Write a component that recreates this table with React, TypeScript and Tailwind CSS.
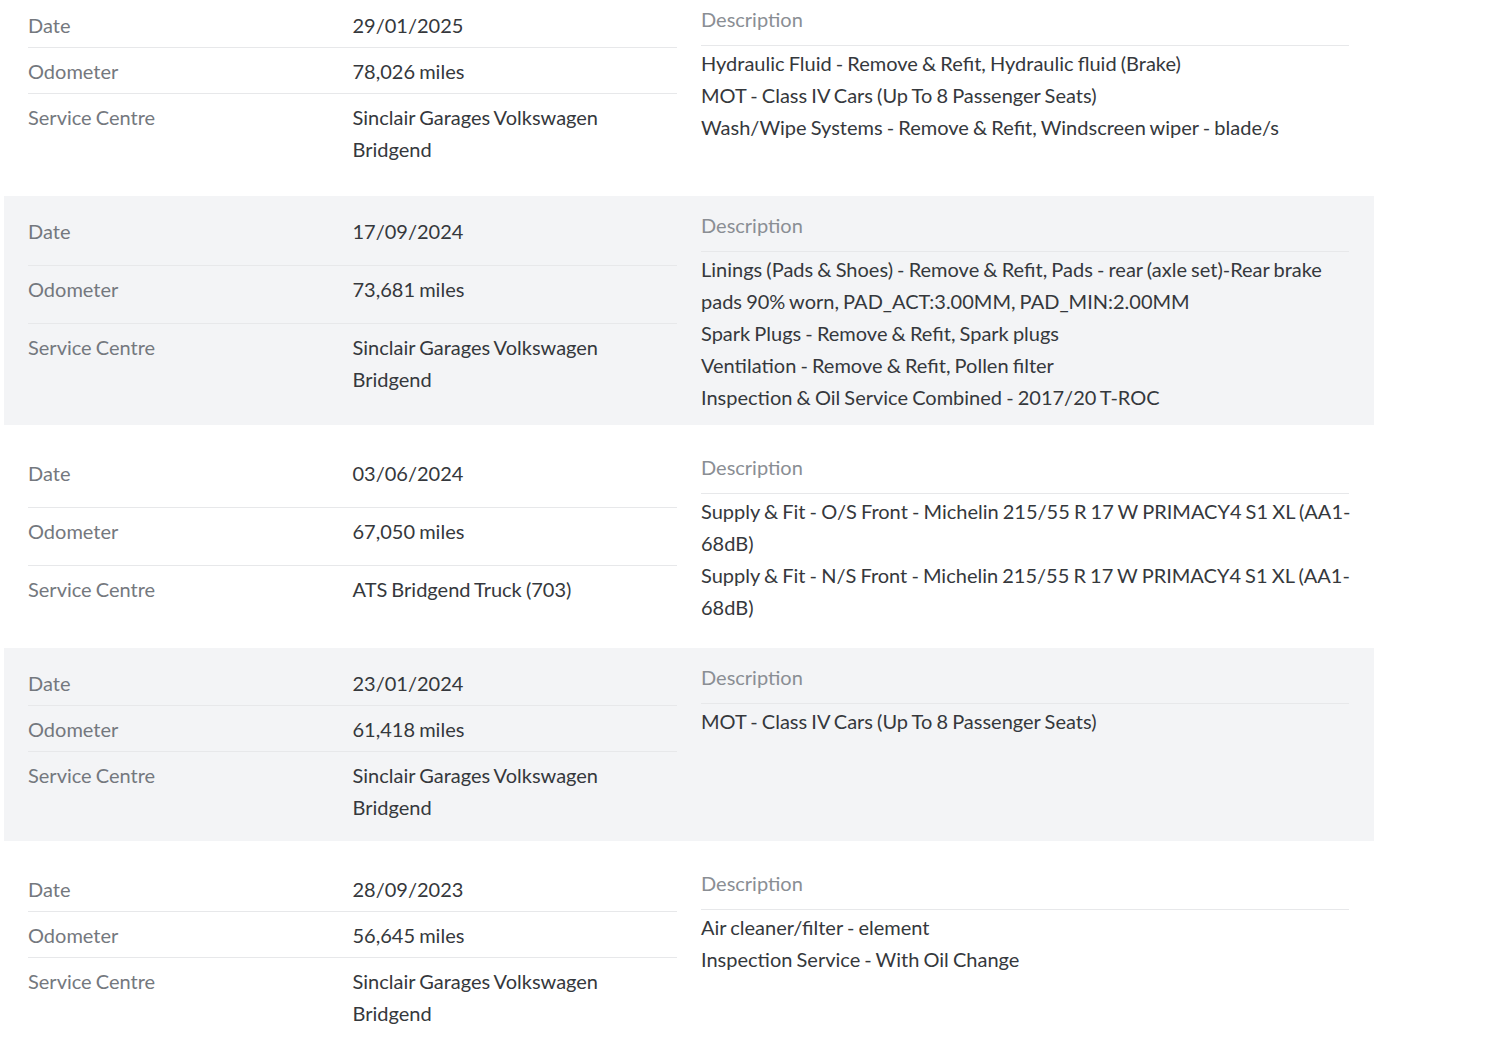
import React from "react";

type Rec = {
  date: string;
  odo: string;
  centre: string[];
  items: string[];
  gray: boolean;
  first?: boolean;
};

const records: Rec[] = [
  {
    date: "29/01/2025",
    odo: "78,026 miles",
    centre: ["Sinclair Garages Volkswagen", "Bridgend"],
    items: [
      "Hydraulic Fluid - Remove & Refit, Hydraulic fluid (Brake)",
      "MOT - Class IV Cars (Up To 8 Passenger Seats)",
      "Wash/Wipe Systems - Remove & Refit, Windscreen wiper - blade/s",
    ],
    gray: false,
    first: true,
  },
  {
    date: "17/09/2024",
    odo: "73,681 miles",
    centre: ["Sinclair Garages Volkswagen", "Bridgend"],
    items: [
      "Linings (Pads & Shoes) - Remove & Refit, Pads - rear (axle set)-Rear brake pads 90% worn, PAD_ACT:3.00MM, PAD_MIN:2.00MM",
      "Spark Plugs - Remove & Refit, Spark plugs",
      "Ventilation - Remove & Refit, Pollen filter",
      "Inspection & Oil Service Combined - 2017/20 T-ROC",
    ],
    gray: true,
  },
  {
    date: "03/06/2024",
    odo: "67,050 miles",
    centre: ["ATS Bridgend Truck (703)"],
    items: [
      "Supply & Fit - O/S Front - Michelin 215/55 R 17 W PRIMACY4 S1 XL (AA1-\u200B68dB)",
      "Supply & Fit - N/S Front - Michelin 215/55 R 17 W PRIMACY4 S1 XL (AA1-\u200B68dB)",
    ],
    gray: false,
  },
  {
    date: "23/01/2024",
    odo: "61,418 miles",
    centre: ["Sinclair Garages Volkswagen", "Bridgend"],
    items: ["MOT - Class IV Cars (Up To 8 Passenger Seats)"],
    gray: true,
  },
  {
    date: "28/09/2023",
    odo: "56,645 miles",
    centre: ["Sinclair Garages Volkswagen", "Bridgend"],
    items: [
      "Air cleaner/filter - element",
      "Inspection Service - With Oil Change",
    ],
    gray: false,
  },
];

function Row({
  label,
  children,
  last,
}: {
  label: string;
  children: React.ReactNode;
  last?: boolean;
}) {
  return (
    <div
      className={
        "grid grow grid-cols-2 items-start pt-[7px] pb-[6px] " +
        (last ? "" : "border-b border-[#e7e8ea]")
      }
    >
      <div className="text-[#74787e]">{label}</div>
      <div className="text-[#35383c]">{children}</div>
    </div>
  );
}

function Card({ r }: { r: Rec }) {
  return (
    <div
      className={
        "mb-[13px] grid grid-cols-2 gap-6 px-6 pb-3 " +
        (r.first ? "pt-[2px] " : "pt-3 ") +
        (r.gray ? "bg-[#f3f4f6]" : "bg-white")
      }
    >
      <div className="flex flex-col">
        <Row label="Date">{r.date}</Row>
        <Row label="Odometer">{r.odo}</Row>
        <Row label="Service Centre" last>
          {r.centre.map((c) => (
            <div key={c}>{c}</div>
          ))}
        </Row>
      </div>
      <div className="flex flex-col pr-[1px]">
        <div className="mt-[1px] border-b border-[#e7e8ea] pb-[10px] text-[#8a8e94]">
          Description
        </div>
        <div className="mt-[1px] mr-[-14px] text-[#35383c]">
          {r.items.map((it) => (
            <div key={it}>{it}</div>
          ))}
        </div>
      </div>
    </div>
  );
}

export default function App() {
  return (
    <div
      className="min-h-[1053px] w-[1500px] overflow-hidden bg-white text-[20px] leading-[32px] [word-spacing:-1px]"
      style={{ fontFamily: "Lato, 'Open Sans', sans-serif" }}
    >
      <div className="ml-1 w-[1370px]">
        {records.map((r) => (
          <Card key={r.date} r={r} />
        ))}
      </div>
    </div>
  );
}
